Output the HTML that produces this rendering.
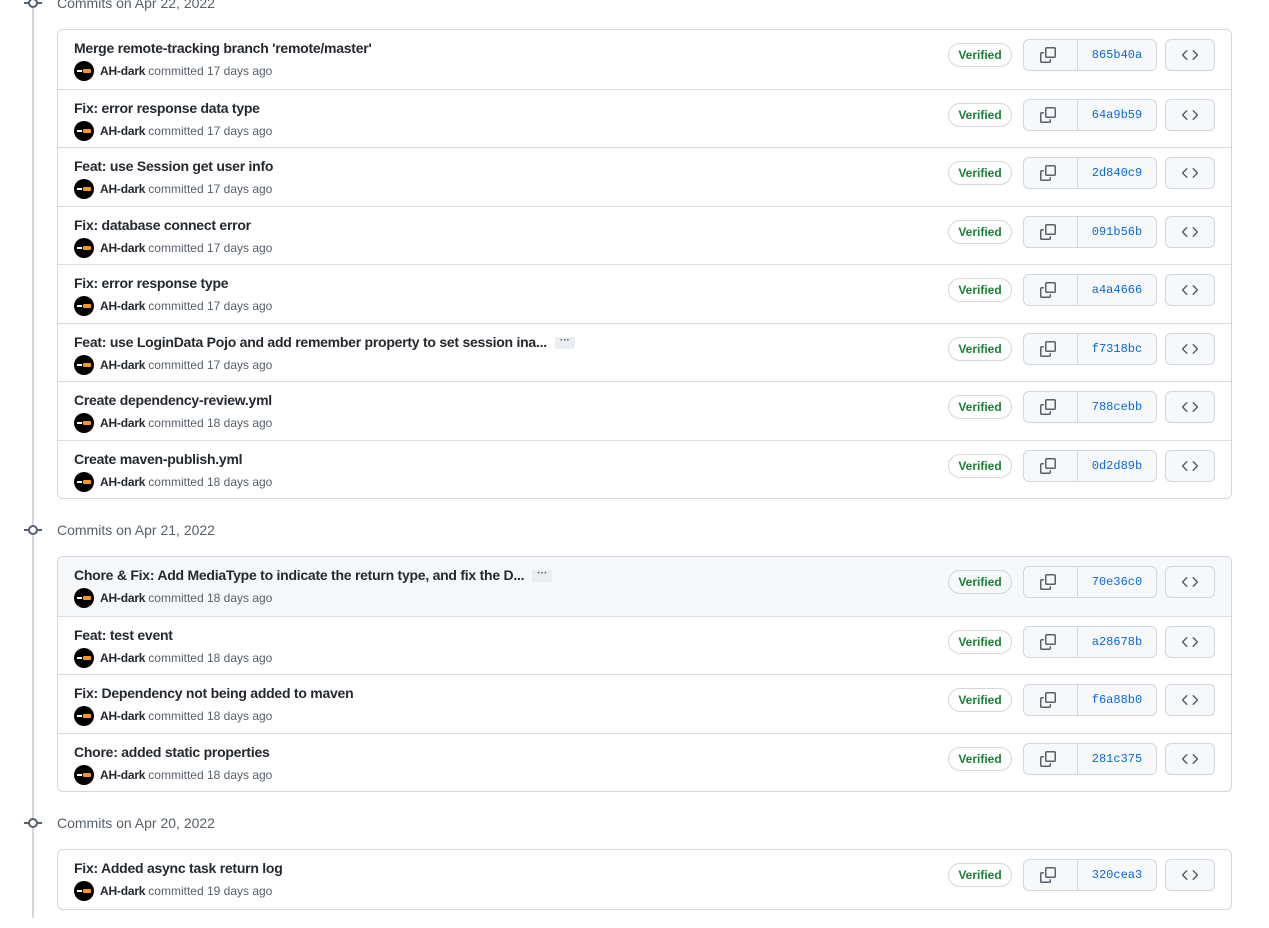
<!DOCTYPE html>
<html><head><meta charset="utf-8"><style>
*{box-sizing:border-box;margin:0;padding:0}
body{width:1269px;height:928px;background:#fff;font-family:"Liberation Sans",Arial,sans-serif;color:#24292f;position:relative;overflow:hidden}
.tl{position:absolute;left:32px;top:0;width:2px;height:918px;background:#d0d7de}
.hd{position:absolute;left:24px;height:20px;display:flex;align-items:center;font-size:14px;color:#57606a}
.hd .ic{width:18px;height:18px;position:relative;margin-right:15px}
.hd .ic:before{content:"";position:absolute;left:0;top:8px;width:18px;height:2px;background:#57606a}
.hd .ic:after{content:"";position:absolute;left:4px;top:4px;width:10px;height:10px;border:2px solid #57606a;border-radius:50%;background:#fff;box-sizing:border-box}
.box{position:absolute;left:57px;width:1175px;border:1px solid #d0d7de;border-radius:6px;overflow:hidden;background:#fff}
.row{position:relative;border-top:1px solid #d8dee4}
.row:first-child{border-top:none}
.t{position:absolute;left:16px;top:10px;font-size:14px;font-weight:600;color:#24292f;white-space:nowrap;letter-spacing:-0.25px}
.dots{display:inline-block;vertical-align:middle;margin-left:8px;width:20px;height:12px;background:#eaeef2;border-radius:2px;font-size:10px;line-height:8px;text-align:center;color:#57606a;font-weight:700;letter-spacing:0}
.m{position:absolute;left:16px;top:31px;font-size:12px;color:#57606a;display:flex;align-items:center;white-space:nowrap}
.av{width:20px;height:20px;border-radius:50%;background:#000;margin-right:6px;position:relative}
.av:after{content:"";position:absolute;left:9px;top:8px;width:8px;height:4px;background:#f7971d;border-radius:1px}
.av:before{content:"";position:absolute;left:3px;top:9px;width:5px;height:2px;background:#fff}
.m b{color:#24292f;font-weight:600;margin-right:3px;letter-spacing:-0.2px}
.v{position:absolute;left:890px;width:64px;height:24px;border:1px solid #d0d7de;border-radius:12px;font-size:12px;color:#1a7f37;font-weight:600;text-align:center;line-height:22px}
.cp{position:absolute;left:965px;width:134px;height:32px;border:1px solid #d0d7de;border-radius:6px;background:#f6f8fa;display:flex}
.cp .a{width:54px;border-right:1px solid #d0d7de;display:flex;align-items:center;justify-content:center;padding-right:5px}
.cp .h{flex:1;font-family:"Liberation Mono",monospace;font-size:12px;color:#0969da;display:flex;align-items:center;justify-content:center}
.cd{position:absolute;left:1107px;width:50px;height:32px;border:1px solid #d0d7de;border-radius:6px;background:#f6f8fa;display:flex;align-items:center;justify-content:center}
</style></head><body>
<div class="tl"></div>
<div class="hd" style="top:-7px"><span class="ic"></span>Commits on Apr 22, 2022</div>
<div class="hd" style="top:520px"><span class="ic"></span>Commits on Apr 21, 2022</div>
<div class="hd" style="top:813px"><span class="ic"></span>Commits on Apr 20, 2022</div>

<div class="box" style="top:29px;height:470px" id="g1"></div>
<div class="box" style="top:556px;height:236px" id="g2"></div>
<div class="box" style="top:849px;height:61px" id="g3"></div>

<script>
var copy='<svg width="16" height="16" viewBox="0 0 16 16" fill="#57606a"><path d="M0 6.75C0 5.78.78 5 1.75 5h1.5a.75.75 0 0 1 0 1.5h-1.5a.25.25 0 0 0-.25.25v7.5c0 .14.11.25.25.25h7.5a.25.25 0 0 0 .25-.25v-1.5a.75.75 0 0 1 1.5 0v1.5A1.75 1.75 0 0 1 9.250 16h-7.5A1.75 1.75 0 0 1 0 14.25Z"/><path d="M5 1.75C5 .78 5.78 0 6.75 0h7.5C15.22 0 16 .78 16 1.75v7.5A1.75 1.75 0 0 1 14.25 11h-7.5A1.75 1.75 0 0 1 5 9.25Zm1.75-.25a.25.25 0 0 0-.25.25v7.5c0 .14.11.25.25.25h7.5a.25.25 0 0 0 .25-.25v-7.5a.25.25 0 0 0-.25-.25Z"/></svg>';
var code='<svg width="16" height="16" viewBox="0 0 16 16" fill="#57606a"><path d="m11.28 3.22 4.25 4.25a.75.75 0 0 1 0 1.06l-4.25 4.25a.75.75 0 0 1-1.06-1.06L13.94 8l-3.72-3.72a.75.75 0 0 1 1.06-1.06Zm-6.56 0a.75.75 0 0 1 0 1.06L1.06 8l3.72 3.72a.75.75 0 0 1-1.06 1.06L-.53 8.53a.75.75 0 0 1 0-1.06l4.25-4.25a.75.75 0 0 1 1.06 0Z" transform="translate(0.5 0)"/></svg>';
function rows(id,list,h){var s='';list.forEach(function(r,i){
s+='<div class="row" style="height:'+h+'px'+(r[3]?';background:#f6f8fa':'')+'"><div class="t">'+r[0]+(r[4]?'<span class="dots">···</span>':'')+'</div><div class="m"><span class="av"></span><b>AH-dark</b>committed '+r[2]+' days ago</div><div class="v" style="top:13px">Verified</div><div class="cp" style="top:9px"><div class="a">'+copy+'</div><div class="h">'+r[1]+'</div></div><div class="cd" style="top:9px">'+code+'</div></div>';});
document.getElementById(id).innerHTML=s;}
rows('g1',[["Merge remote-tracking branch 'remote/master'","865b40a",17],["Fix: error response data type","64a9b59",17],["Feat: use Session get user info","2d840c9",17],["Fix: database connect error","091b56b",17],["Fix: error response type","a4a4666",17],["Feat: use LoginData Pojo and add remember property to set session ina...","f7318bc",17,0,1],["Create dependency-review.yml","788cebb",18],["Create maven-publish.yml","0d2d89b",18]],58.5);
rows('g2',[["Chore &amp; Fix: Add MediaType to indicate the return type, and fix the D...","70e36c0",18,1,1],["Feat: test event","a28678b",18],["Fix: Dependency not being added to maven","f6a88b0",18],["Chore: added static properties","281c375",18]],58.5);
rows('g3',[["Fix: Added async task return log","320cea3",19]],59);
</script>
</body></html>
